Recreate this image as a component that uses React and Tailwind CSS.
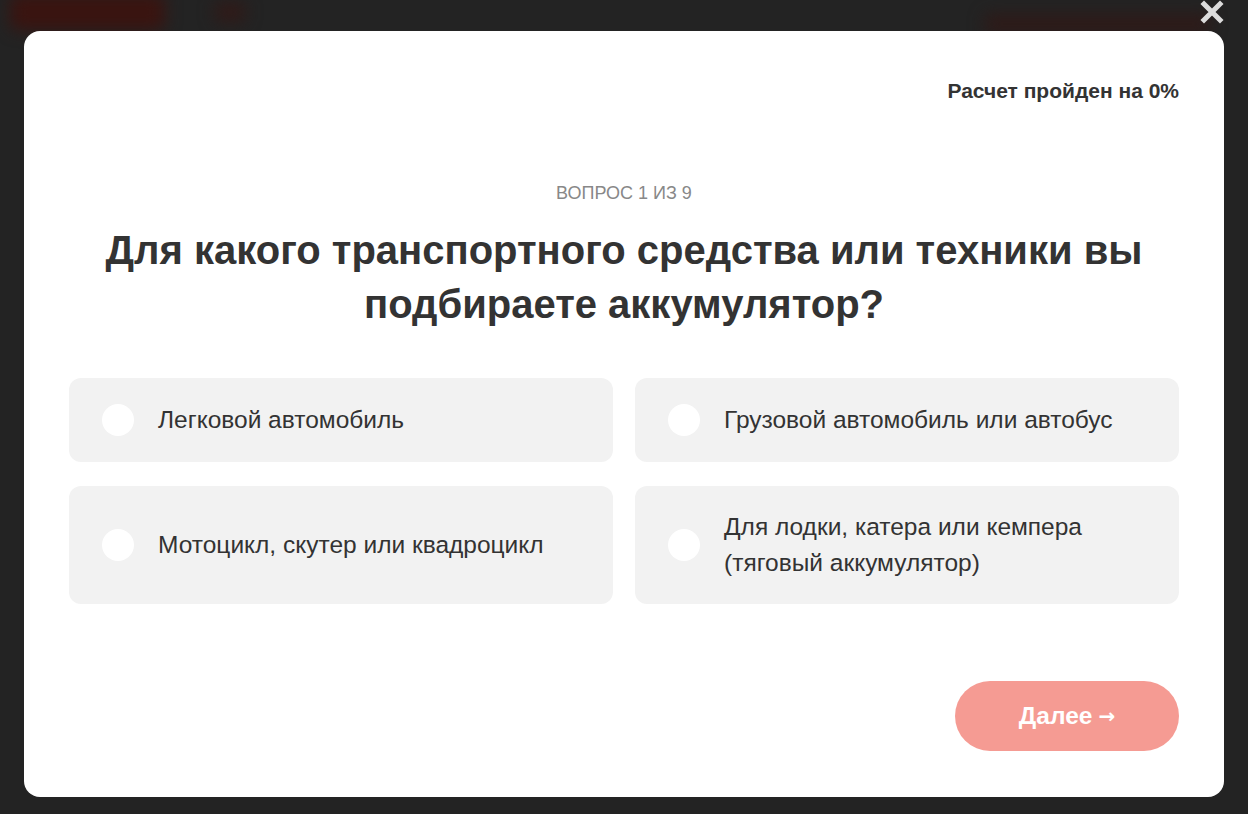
import React, { useState } from 'react';

const options = [
  { id: 1, label: 'Легковой автомобиль' },
  { id: 2, label: 'Грузовой автомобиль или автобус' },
  { id: 3, label: 'Мотоцикл, скутер или квадроцикл' },
  { id: 4, label: 'Для лодки, катера или кемпера (тяговый аккумулятор)' },
];

const Option = ({ option, selected, onSelect }) => (
  <button
    type="button"
    onClick={() => onSelect(option.id)}
    className="flex w-full items-center gap-6 rounded-xl bg-[#f2f2f2] pl-[33px] pr-8 text-left"
  >
    <span className="flex h-8 w-8 shrink-0 items-center justify-center rounded-full bg-white">
      {selected && <span className="h-3 w-3 rounded-full bg-[#ef6f66]" />}
    </span>
    <span className="text-[24.5px] leading-9 text-[#333]">{option.label}</span>
  </button>
);

const App = () => {
  const [selected, setSelected] = useState(null);

  return (
    <div className="relative h-[814px] w-full overflow-hidden bg-[#232323] pt-[31px] [font-family:'Liberation_Sans',Arial,sans-serif]">
      {/* blurred page behind the overlay */}
      <div className="absolute left-[10px] top-[-6px] h-[36px] w-[155px] rounded-lg bg-[#3a1410] blur-sm" />
      <div className="absolute left-[215px] top-[2px] h-[20px] w-[30px] rounded bg-[#301a18] blur-sm" />
      <div className="absolute left-[985px] top-[14px] h-[20px] w-[225px] rounded bg-[#2e1a18] blur-sm" />

      <button type="button" className="absolute right-[24px] top-0 h-[24px] w-[24px] text-[#dcdcdc]">
        <svg viewBox="0 0 24 24" className="h-full w-full">
          <path d="M4 4 L20 20 M20 4 L4 20" stroke="currentColor" strokeWidth="5" strokeLinecap="square" />
        </svg>
      </button>

      <div className="relative mx-[24px] flex h-[766px] flex-col rounded-2xl bg-white px-[45px] pt-[48px]">
        <div className="text-right text-[21px] font-bold leading-6 text-[#333]">Расчет пройден на 0%</div>

        <div className="mt-[80px] text-center text-[18px] leading-5 text-[#888]">ВОПРОС 1 ИЗ 9</div>

        <h2 className="mx-auto mt-[20px] max-w-[1080px] text-center text-[40px] font-bold leading-[54px] text-[#333]">
          Для какого транспортного средства или техники вы подбираете аккумулятор?
        </h2>

        <div className="mt-[47px] grid grid-cols-2 gap-x-[22px] gap-y-[24px]">
          {options.slice(0, 2).map(o => (
            <div key={o.id} className="flex h-[84px]">
              <Option option={o} selected={selected === o.id} onSelect={setSelected} />
            </div>
          ))}
          {options.slice(2).map(o => (
            <div key={o.id} className="flex h-[118px]">
              <Option option={o} selected={selected === o.id} onSelect={setSelected} />
            </div>
          ))}
        </div>

        <div className="mt-[77px] flex justify-end">
          <button
            type="button"
            className="flex h-[70px] w-[224px] items-center justify-center gap-[6px] rounded-full bg-[#f59b93] text-[24.5px] font-bold text-white"
          >
            Далее
            <span className="text-[20px] [font-family:'DejaVu_Sans',sans-serif]">→</span>
          </button>
        </div>
      </div>
    </div>
  );
};

export default App;
